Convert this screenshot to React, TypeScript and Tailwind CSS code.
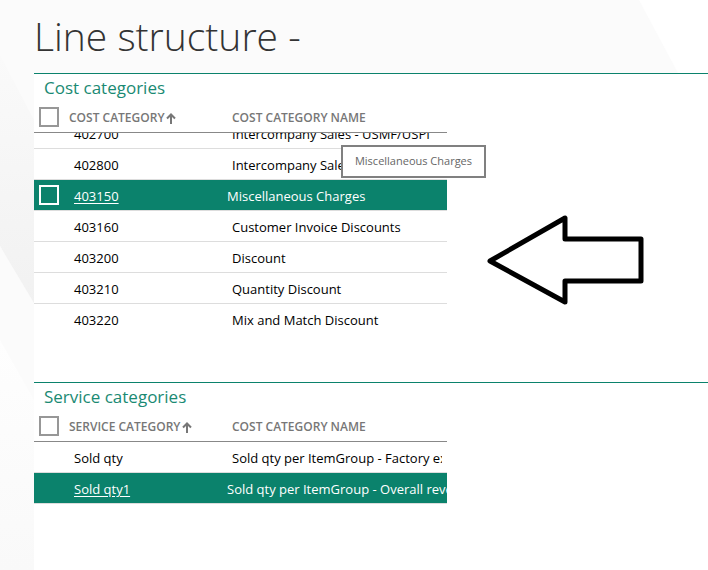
import { useId } from "react";

type Row = { id: string; name: string; selected?: boolean; checkbox?: boolean };

const costRows: Row[] = [
  { id: "402700", name: "Intercompany Sales - USMF/USPI" },
  { id: "402800", name: "Intercompany Sales - USRT" },
  { id: "403150", name: "Miscellaneous Charges", selected: true, checkbox: true },
  { id: "403160", name: "Customer Invoice Discounts" },
  { id: "403200", name: "Discount" },
  { id: "403210", name: "Quantity Discount" },
  { id: "403220", name: "Mix and Match Discount" },
];

const serviceRows: Row[] = [
  { id: "Sold qty", name: "Sold qty per ItemGroup - Factory expenses" },
  { id: "Sold qty1", name: "Sold qty per ItemGroup - Overall revenue", selected: true },
];

function Backdrop() {
  return (
    <svg className="absolute inset-0 -z-10 h-full w-full" aria-hidden="true">
      <defs>
        <linearGradient id="shade" x1="0" y1="0" x2="0" y2="1">
          <stop offset="0" stopColor="#fafafa" />
          <stop offset="1" stopColor="#f1f1f1" />
        </linearGradient>
        <linearGradient id="fade" x1="0" y1="0" x2="0" y2="1">
          <stop offset="0" stopColor="#fefefe" />
          <stop offset="1" stopColor="#f9f9f9" />
        </linearGradient>
      </defs>
      <rect width="100%" height="100%" fill="#fbfbfb" />
      <polygon points="0,55 34,120 34,310 0,246" fill="url(#shade)" />
      <polygon points="0,246 34,303 34,400 0,340" fill="#fbfbfb" />
      <polygon points="0,340 34,400 34,570 0,570" fill="url(#fade)" />
      <polygon points="639,0 708,0 708,73 678,73" fill="#ffffff" />
    </svg>
  );
}

function SortArrow() {
  return (
    <svg width="10" height="11" viewBox="0 0 10 11" fill="none" stroke="#777777" strokeWidth="2" aria-hidden="true">
      <path d="M5 11V1.5M1 5.5L5 1.5L9 5.5" />
    </svg>
  );
}

function Tick({ label, light }: { label: string; light?: boolean }) {
  return (
    <input
      type="checkbox"
      aria-label={label}
      className={`block size-5 appearance-none border-2 ${light ? "border-white" : "border-[#979797] bg-white"}`}
    />
  );
}

function Section({ title, column, rows, scrolled }: { title: string; column: string; rows: Row[]; scrolled?: boolean }) {
  const headingId = useId();
  return (
    <section className="border-t border-[#0b826c] bg-white">
      <h2 id={headingId} className="pb-0.5 pl-2.5 text-[17px] leading-7 text-[#1a8a73]">
        {title}
      </h2>
      <table aria-labelledby={headingId} className="block max-w-[413px] text-left text-[13px]">
        <thead className="block border-b border-[#888888]">
          <tr className="grid h-7 grid-cols-[35px_163px_1fr] items-center pb-0.5 text-xs text-[#777777]">
            <th className="pl-[5px]">
              <Tick label={`Select all ${title.toLowerCase()}`} />
            </th>
            <th className="pt-0.5 font-semibold">
              <button type="button" className="flex cursor-pointer items-center gap-0.5 font-semibold">
                {column}
                <SortArrow />
              </button>
            </th>
            <th className="pt-0.5 font-semibold">COST CATEGORY NAME</th>
          </tr>
        </thead>
        <tbody className={`flex flex-col overflow-hidden ${scrolled ? "*:first:-mt-[15px]" : ""}`}>
          {rows.map((row) => (
            <tr
              key={row.id}
              aria-selected={row.selected ?? false}
              className={`grid h-[31px] shrink-0 items-center border-b border-[#dddddd] ${
                row.selected
                  ? "grid-cols-[40px_153px_1fr] bg-[#0b826c] bg-clip-padding text-white"
                  : "grid-cols-[40px_158px_1fr] pr-[5px] text-black last:border-transparent"
              }`}
            >
              <td className="pl-[5px]">{row.checkbox && <Tick label={`Select ${row.id}`} light />}</td>
              <td className="pt-[3px]">
                {row.selected ? (
                  <a href="#" className="underline underline-offset-2">
                    {row.id}
                  </a>
                ) : (
                  row.id
                )}
              </td>
              <td className="overflow-hidden pt-[3px] whitespace-nowrap">{row.name}</td>
            </tr>
          ))}
        </tbody>
      </table>
    </section>
  );
}

export default function App() {
  return (
    <div className="relative isolate min-h-screen overflow-hidden font-['Open_Sans','Noto_Sans',sans-serif]">
      <Backdrop />
      <main className="flex min-h-screen flex-col pl-[34px]">
        <h1 className="h-[73px] text-[39px] leading-[72px] font-light text-[#333333]">Line structure -</h1>
        <div className="relative bg-white pb-[47px]">
          <Section title="Cost categories" column="COST CATEGORY" rows={costRows} scrolled />
          <div
            role="tooltip"
            className="absolute top-[72px] left-[307px] flex h-[33px] w-[145px] items-center justify-center border-2 border-[#808080] bg-white text-[11px] whitespace-nowrap text-[#666666]"
          >
            Miscellaneous Charges
          </div>
          <svg className="absolute top-[139px] left-[450px]" width="164" height="98" viewBox="0 0 164 98" aria-hidden="true">
            <path
              d="M6 49L81 6V27H157V69H81V90Z"
              fill="#ffffff"
              stroke="#000000"
              strokeWidth="5"
              strokeLinejoin="round"
            />
          </svg>
        </div>
        <div className="grow bg-white">
          <Section title="Service categories" column="SERVICE CATEGORY" rows={serviceRows} />
        </div>
      </main>
    </div>
  );
}
